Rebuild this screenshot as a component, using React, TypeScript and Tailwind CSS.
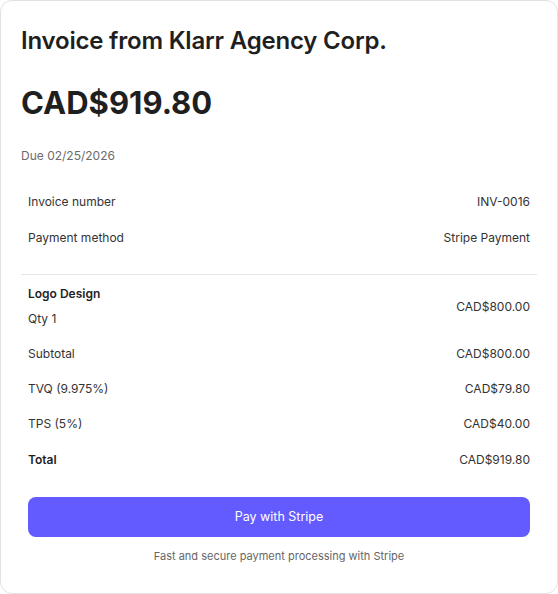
export default function App() {
  const lines = [
    { label: 'Subtotal', value: 'CAD$800.00' },
    { label: 'TVQ (9.975%)', value: 'CAD$79.80' },
    { label: 'TPS (5%)', value: 'CAD$40.00' },
  ];

  return (
    <div className="h-[594px] w-[558px] bg-white font-['Inter',sans-serif]">
      <div className="flex h-full flex-col rounded-xl border border-[#e2e2e2] bg-white px-5 pt-6">
        <h1 className="text-2xl font-semibold leading-8 tracking-[-0.2px] text-[#1f1f1f]">
          Invoice from Klarr Agency Corp.
        </h1>
        <div className="mt-7 text-[31px] font-bold leading-9 text-[#1f1f1f]">CAD$919.80</div>
        <div className="mt-[27px] text-xs leading-4 text-[#6b6b6b]">Due 02/25/2026</div>

        <div className="mt-5 px-[7px] text-xs text-[#333]">
          <div className="flex h-9 items-center justify-between">
            <span>Invoice number</span>
            <span>INV-0016</span>
          </div>
          <div className="flex h-9 items-center justify-between">
            <span>Payment method</span>
            <span>Stripe Payment</span>
          </div>
        </div>

        <div className="mt-[18px] border-t border-[#e5e5e5]" />

        <div className="px-[7px] text-xs text-[#333]">
          <div className="flex items-center justify-between pt-[11px] pb-[9px]">
            <div className="flex flex-col gap-[9px] leading-4">
              <span className="font-semibold text-[#1f1f1f]">Logo Design</span>
              <span>Qty 1</span>
            </div>
            <span>CAD$800.00</span>
          </div>
          {lines.map((l) => (
            <div key={l.label} className="flex h-[35px] items-center justify-between">
              <span>{l.label}</span>
              <span>{l.value}</span>
            </div>
          ))}
          <div className="flex h-[38px] items-center justify-between">
            <span className="font-semibold text-[#1f1f1f]">Total</span>
            <span>CAD$919.80</span>
          </div>
          <button
            type="button"
            className="mt-[18px] h-10 w-full rounded-lg bg-[#635bff] text-[12.5px] font-normal text-white"
          >
            Pay with Stripe
          </button>
          <p className="mt-[11px] text-center text-[11px] leading-4 text-[#666]">
            Fast and secure payment processing with Stripe
          </p>
        </div>
      </div>
    </div>
  );
}
